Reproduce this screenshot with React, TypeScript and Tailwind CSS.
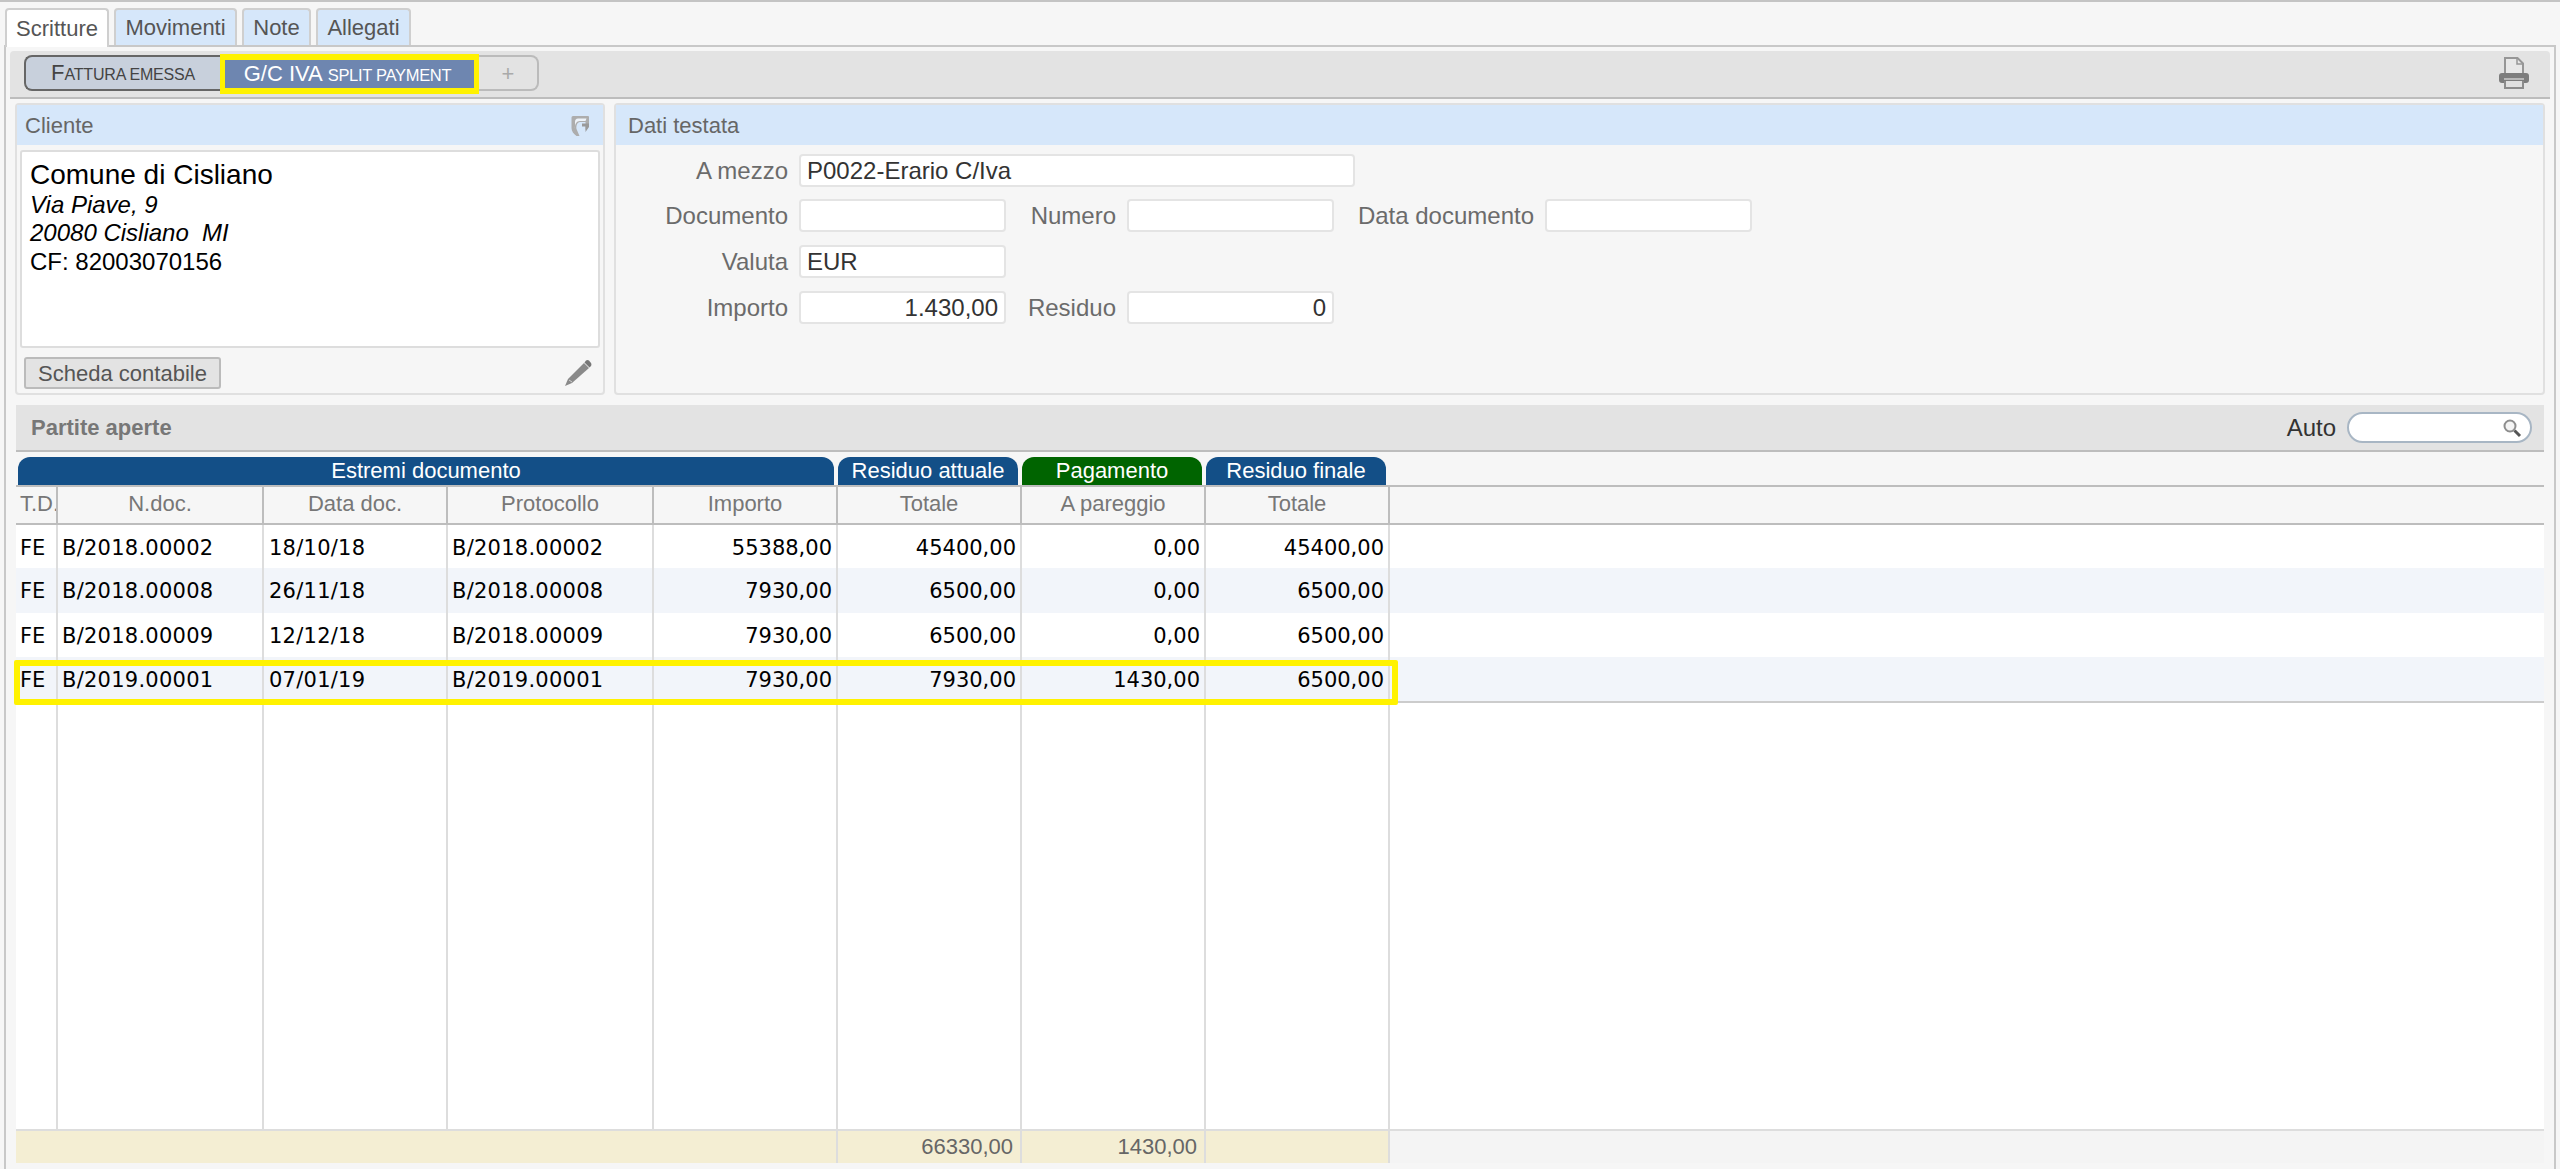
import React from "react";

const sans = "font-['Liberation_Sans',Arial,sans-serif]";

const tabs = [
  { label: "Scritture", width: "w-[104px]", active: true },
  { label: "Movimenti", width: "w-[123px]", active: false },
  { label: "Note", width: "w-[69px]", active: false },
  { label: "Allegati", width: "w-[95px]", active: false },
];

const bands = [
  { label: "Estremi documento", width: "w-[816px]", color: "bg-[#134f87]" },
  { label: "Residuo attuale", width: "w-[180px]", color: "bg-[#134f87]" },
  { label: "Pagamento", width: "w-[180px]", color: "bg-[#006400]" },
  { label: "Residuo finale", width: "w-[180px]", color: "bg-[#134f87]" },
];

const columns = [
  { label: "T.D.", width: "w-[42px]", align: "text-left pl-[4px]" },
  { label: "N.doc.", width: "w-[206px]", align: "text-left pl-[4px] tracking-[0.25px]" },
  { label: "Data doc.", width: "w-[184px]", align: "text-left pl-[5px] tracking-[0.25px]" },
  { label: "Protocollo", width: "w-[206px]", align: "text-left pl-[4px] tracking-[0.25px]" },
  { label: "Importo", width: "w-[184px]", align: "text-right pr-[4px]" },
  { label: "Totale", width: "w-[184px]", align: "text-right pr-[4px]" },
  { label: "A pareggio", width: "w-[184px]", align: "text-right pr-[4px]" },
  { label: "Totale", width: "w-[184px]", align: "text-right pr-[4px]" },
];

const rows = [
  { h: "h-[43px]", bg: "bg-white", cells: ["FE", "B/2018.00002", "18/10/18", "B/2018.00002", "55388,00", "45400,00", "0,00", "45400,00"] },
  { h: "h-[45px]", bg: "bg-[#f2f5fa]", cells: ["FE", "B/2018.00008", "26/11/18", "B/2018.00008", "7930,00", "6500,00", "0,00", "6500,00"] },
  { h: "h-[44px]", bg: "bg-white", cells: ["FE", "B/2018.00009", "12/12/18", "B/2018.00009", "7930,00", "6500,00", "0,00", "6500,00"] },
  { h: "h-[46px]", bg: "bg-[#f2f5fa]", cells: ["FE", "B/2019.00001", "07/01/19", "B/2019.00001", "7930,00", "7930,00", "1430,00", "6500,00"] },
];

const PrinterIcon = () => (
  <svg width="32" height="32" viewBox="0 0 32 32" fill="none" className="mt-[2px]">
    <path d="M7 17V1H19.500L25 6.500V17" stroke="#969696" strokeWidth="2" fill="#e8e8e8" />
    <path d="M19 1V7H25" stroke="#969696" strokeWidth="1.500" />
    <path d="M4 16H28Q31 16 31 19V23Q31 26 28 26H4Q1 26 1 23V19Q1 16 4 16Z" fill="#7d7d7d" />
    <rect x="6" y="21" width="20" height="2" fill="#b8b8b8" />
    <path d="M7 24V31H25V24" stroke="#8c8c8c" strokeWidth="2" fill="#e0e0e0" />
  </svg>
);

const LinkIcon = () => (
  <svg width="20" height="22" viewBox="0 0 20 22" fill="none" className="mt-[2px]">
    <path d="M3 1H18Q19 1 19 2V11L15.500 15V7H10C7 7 6 11 6.500 14L9.500 21H6.500C3.500 19 1.500 16 1.500 13V2.500Q1.500 1 3 1Z" fill="#adadad" />
    <path d="M5 7Q5 3.500 8 3.500H16.500L15.500 6H10C6.500 6 4.500 9 5 14Z" fill="#eef3f9" />
    <path d="M12 8.500H19V12L15.500 17V11.500H12Z" fill="#9a9a9a" />
  </svg>
);

const PencilIcon = () => (
  <svg width="28" height="28" viewBox="0 0 28 28" fill="none" className="mt-[2px]">
    <path d="M20 4L25 9L8 24L1 27L4 20Z" fill="#8a8a8a" />
    <path d="M22 1.500C23 .8 24 .8 25 1.500L27 4C27.600 5 27.500 6 27 7L25.500 8.500L20.500 3.500Z" fill="#777777" />
    <path d="M5 21L8 23" stroke="#d0d0d0" strokeWidth="1" />
  </svg>
);

const SearchIcon = () => (
  <svg width="20" height="20" viewBox="0 0 20 20" fill="none">
    <circle cx="8" cy="8" r="5.500" stroke="#8d8d8d" strokeWidth="2" fill="#f4f4f4" />
    <path d="M12.500 12.500L18 18" stroke="#555555" strokeWidth="3" />
  </svg>
);

const Field = ({ label, labelWidth, width, value, right }: { label: string; labelWidth: string; width: string; value?: string; right?: boolean }) => (
  <>
    <span className={`${labelWidth} shrink-0 text-right text-[24px] leading-[29px] text-[#6b6b6b]`}>{label}</span>
    <div className={`${width} ml-[11px] h-[33px] shrink-0 rounded-[4px] border-2 border-[#e4e4e4] bg-white px-[6px] text-[24px] leading-[29px] text-[#333333] ${right ? "text-right" : "text-left"}`}>
      {value}
    </div>
  </>
);

export default function App() {
  return (
    <div className={`${sans} relative h-[1169px] w-full overflow-hidden border-t-2 border-[#c4c4c4] bg-[#f6f6f6]`}>
      {/* Tabs */}
      <div className="flex h-[43px] items-end gap-[5px] pl-[5px]">
        {tabs.map((t) => (
          <div
            key={t.label}
            className={`${t.width} relative flex items-center justify-center rounded-t-[4px] border-2 border-b-0 border-[#cfcfcf] text-[22px] text-[#555555] ${t.active ? "z-10 -mb-[2px] h-[39px] bg-white" : "h-[37px] bg-[#d6e7fa]"}`}
          >
            {t.label}
          </div>
        ))}
      </div>

      {/* Main panel */}
      <div className="mx-[4px] h-[1124px] border-x-2 border-t-2 border-[#c8c8c8] px-[4px] pt-[4px]">
        {/* Toolbar */}
        <div className="flex h-[48px] items-start justify-between rounded-t-[4px] border-b-2 border-[#bdbdbd] bg-[#e3e3e3] pl-[14px] pr-[20px] pt-[4px]">
          <div className="flex">
            <div className="flex h-[36px] w-[196px] items-baseline justify-center rounded-l-[8px] border-2 border-r-0 border-[#666666] bg-[#c8d0dc] pt-[5px] text-[22px] leading-none text-[#444444]">
              F<span className="text-[16px] uppercase tracking-[-0.2px]">attura emessa</span>
            </div>
            <div className="z-10 -mt-[1px] flex h-[40px] w-[259px] items-baseline justify-center border-x-[5px] border-y-[6px] border-[#fff200] bg-[#6e86b0] pr-[4px] pt-[3px] text-[22px] leading-none text-white">
              <span className="whitespace-pre">G/C IVA </span>
              <span className="text-[16.5px] uppercase tracking-[-0.3px]">split payment</span>
            </div>
            <div className="flex h-[36px] w-[60px] items-center justify-center rounded-r-[8px] border-2 border-l-0 border-[#bbbbbb] text-[22px] text-[#aaaaaa]">
              +
            </div>
          </div>
          <PrinterIcon />
        </div>

        {/* Upper panels */}
        <div className="mt-[4px] flex h-[292px] gap-[9px] pl-[5px] pr-[5px]">
          <div className="flex w-[590px] flex-col rounded-[4px] border-2 border-[#e0e0e0]">
            <div className="flex h-[40px] items-center justify-between bg-[#d6e7fa] pl-[8px] pr-[13px] text-[22px] text-[#666666]">
              <span>Cliente</span>
              <LinkIcon />
            </div>
            <div className="mx-[3px] mt-[5px] h-[198px] rounded-[3px] border-2 border-[#dddddd] bg-white pl-[8px] pt-[7px] text-black">
              <div className="text-[28px] leading-[32px]">Comune di Cisliano</div>
              <div className="text-[24px] italic leading-[28px]">Via Piave, 9</div>
              <div className="whitespace-pre text-[24px] italic leading-[28px]">20080 Cisliano  MI</div>
              <div className="text-[24px] leading-[29px]">CF: 82003070156</div>
            </div>
            <div className="mt-[9px] flex items-start justify-between pl-[7px] pr-[11px]">
              <div className="flex h-[32px] w-[197px] items-center justify-center rounded-[3px] border-2 border-[#bbbbbb] bg-[#e3e3e3] text-[22px] text-[#555555]">
                Scheda contabile
              </div>
              <PencilIcon />
            </div>
          </div>

          <div className="flex flex-1 flex-col rounded-[4px] border-2 border-[#e0e0e0]">
            <div className="flex h-[40px] items-center bg-[#d6e7fa] pl-[12px] text-[22px] text-[#666666]">Dati testata</div>
            <div className="flex items-center pl-[11px] pt-[9px]">
              <Field label="A mezzo" labelWidth="w-[161px]" width="w-[556px]" value="P0022-Erario C/Iva" />
            </div>
            <div className="mt-[12px] flex items-center pl-[11px]">
              <Field label="Documento" labelWidth="w-[161px]" width="w-[207px]" />
              <Field label="Numero" labelWidth="w-[110px]" width="w-[207px]" />
              <Field label="Data documento" labelWidth="w-[200px]" width="w-[207px]" />
            </div>
            <div className="mt-[13px] flex items-center pl-[11px]">
              <Field label="Valuta" labelWidth="w-[161px]" width="w-[207px]" value="EUR" />
            </div>
            <div className="mt-[13px] flex items-center pl-[11px]">
              <Field label="Importo" labelWidth="w-[161px]" width="w-[207px]" value="1.430,00" right />
              <Field label="Residuo" labelWidth="w-[110px]" width="w-[207px]" value="0" right />
            </div>
          </div>
        </div>

        {/* Partite aperte */}
        <div className="relative mx-[6px] mt-[10px]">
          <div className="flex h-[47px] items-center justify-between border-b-2 border-[#bdbdbd] bg-[#e3e3e3] pl-[15px] pr-[12px]">
            <span className="text-[22px] font-bold text-[#777777]">Partite aperte</span>
            <div className="flex items-center gap-[11px]">
              <span className="text-[24px] text-[#333333]">Auto</span>
              <div className="flex h-[31px] w-[185px] items-center justify-end rounded-full border-2 border-[#a8b6c4] bg-white pr-[8px]">
                <SearchIcon />
              </div>
            </div>
          </div>

          <div className="mt-[5px] flex h-[28px] gap-[4px] pl-[2px]">
            {bands.map((b) => (
              <div key={b.label} className={`${b.width} ${b.color} flex items-center justify-center rounded-t-[12px] text-[22px] leading-none text-white`}>
                {b.label}
              </div>
            ))}
          </div>

          <div className="flex h-[40px] border-y-2 border-[#bdbdbd]">
            {columns.map((c, i) => (
              <div
                key={i}
                className={`${c.width} shrink-0 overflow-hidden whitespace-nowrap border-r-2 border-[#bdbdbd] text-[22px] leading-[34px] text-[#777777] ${i === 0 ? "pl-[4px]" : "text-center"}`}
              >
                {c.label}
              </div>
            ))}
          </div>

          {rows.map((row, r) => (
            <div key={r} className={`flex ${row.h} ${row.bg} ${r === 3 ? "border-b-2 border-[#cccccc]" : ""}`}>
              {row.cells.map((cell, i) => (
                <div
                  key={i}
                  className={`${columns[i].width} ${columns[i].align} shrink-0 self-stretch border-r-2 border-[#dddddd] pt-[3px] font-['DejaVu_Sans',sans-serif] text-[21px] leading-[40px] text-black`}
                >
                  {cell}
                </div>
              ))}
            </div>
          ))}

          <div className="flex h-[426px] bg-white">
            {columns.map((c, i) => (
              <div key={i} className={`${c.width} shrink-0 border-r-2 border-[#dddddd]`} />
            ))}
          </div>

          {/* Totals */}
          <div className="flex h-[34px] border-t-2 border-[#dddddd] bg-[#f4f4f4] text-right text-[22px] leading-[32px] text-[#666666]">
            <div className="w-[822px] shrink-0 border-r-2 border-[#dddddd] bg-[#f4eed3]" />
            <div className="w-[184px] shrink-0 border-r-2 border-[#dddddd] bg-[#f4eed3] pr-[7px]">66330,00</div>
            <div className="w-[184px] shrink-0 border-r-2 border-[#dddddd] bg-[#f4eed3] pr-[7px]">1430,00</div>
            <div className="w-[184px] shrink-0 border-r-2 border-[#dddddd] bg-[#f4eed3]" />
          </div>
        </div>
      </div>

      {/* Yellow mark over the fourth row */}
      <div className="pointer-events-none absolute left-[14px] top-[658px] h-[45px] w-[1384px] rounded-[2px] border-[6px] border-[#fff200]" />
    </div>
  );
}
